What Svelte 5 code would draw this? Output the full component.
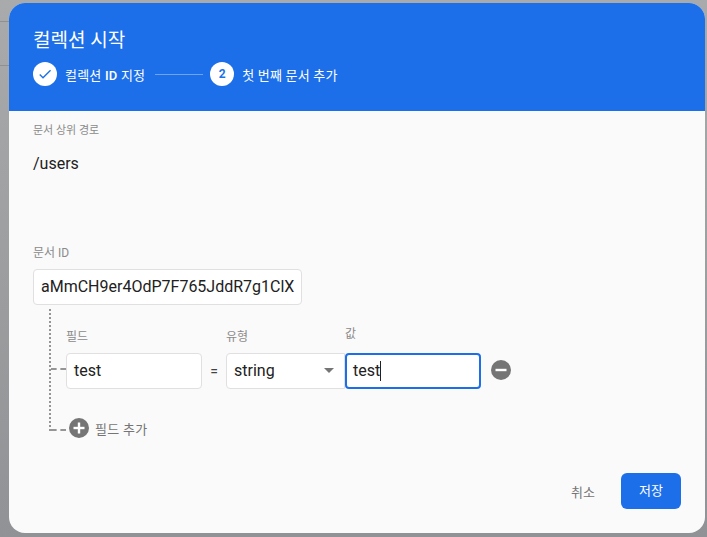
<script>
  let docId = "aMmCH9er4OdP7F765JddR7g1ClX";
</script>

<div class="backdrop">
  <div class="dialog">
    <header>
      <h1>컬렉션 시작</h1>
      <div class="stepper">
        <span class="circle">
          <svg width="16" height="16" viewBox="0 0 24 24"><path d="M9 16.2 4.8 12l-1.4 1.4L9 19 21 7l-1.4-1.4z" fill="#1a73e8" /></svg>
        </span>
        <span class="step-label">컬렉션 <b>ID</b> 지정</span>
        <span class="step-line"></span>
        <span class="circle num">2</span>
        <span class="step-label">첫 번째 문서 추가</span>
      </div>
    </header>

    <div class="body">
      <div class="label">문서 상위 경로</div>
      <div class="path">/users</div>

      <div class="label id-label">문서 ID</div>
      <div class="input id-input">{docId}</div>

      <div class="tree">
        <div class="labels">
          <span class="col-name">필드</span>
          <span class="col-type">유형</span>
          <span class="col-value">값</span>
        </div>
        <div class="row">
          <div class="input name">test</div>
          <span class="eq">=</span>
          <div class="input type">string<span class="caret"></span></div>
          <div class="input value">test<span class="cursor"></span></div>
          <svg class="remove" width="20" height="20" viewBox="0 0 20 20">
            <circle cx="10" cy="10" r="10" fill="#757575" />
            <rect x="4.5" y="8.8" width="11" height="2.4" fill="#fff" />
          </svg>
        </div>
        <div class="add">
          <svg width="20" height="20" viewBox="0 0 20 20">
            <circle cx="10" cy="10" r="10" fill="#757575" />
            <rect x="4.5" y="8.8" width="11" height="2.4" fill="#fff" />
            <rect x="8.8" y="4.5" width="2.4" height="11" fill="#fff" />
          </svg>
          <span>필드 추가</span>
        </div>
      </div>

      <footer>
        <span class="cancel">취소</span>
        <span class="save">저장</span>
      </footer>
    </div>
  </div>
</div>

<style>
  :global(body) {
    margin: 0;
    font-family: Roboto, "Noto Sans CJK KR", sans-serif;
  }

  .backdrop {
    width: 707px;
    height: 537px;
    box-sizing: border-box;
    padding: 3px 2px 4px 9px;
    background:
      linear-gradient(#8f9092, #8f9092) 0 21px / 9px 1px no-repeat,
      linear-gradient(#8f9092, #8f9092) 0 65px / 9px 1px no-repeat,
      linear-gradient(#a9aaab, #909295);
    overflow: hidden;
  }

  .dialog {
    height: 530px;
    border-radius: 16px;
    overflow: hidden;
    background: #fafafa;
  }

  header {
    height: 108px;
    box-sizing: border-box;
    padding: 24px 24px 0;
    background: #1c6fe9;
    color: #fff;
  }

  h1 {
    margin: 0;
    font-size: 19px;
    font-weight: 400;
    line-height: 28px;
  }

  .stepper {
    display: flex;
    align-items: center;
    margin-top: 7px;
  }

  .circle {
    flex: none;
    display: flex;
    align-items: center;
    justify-content: center;
    width: 24px;
    height: 24px;
    border-radius: 50%;
    background: #fff;
  }

  .num {
    color: #1a73e8;
    font-size: 12px;
    font-weight: 700;
  }

  .step-label {
    margin-left: 8px;
    font-size: 13px;
    letter-spacing: 0.2px;
  }

  .step-label b {
    font-weight: 500;
  }

  .step-line {
    width: 48px;
    height: 1px;
    margin: 0 7px 0 10px;
    background: #6ea5f0;
  }

  .body {
    padding: 0 24px;
    color: #212121;
  }

  .label {
    color: #8a8a8a;
    font-size: 11px;
    line-height: 16px;
  }

  .body > .label:first-child {
    padding-top: 12px;
  }

  .path {
    margin-top: 13px;
    font-size: 16px;
    line-height: 24px;
  }

  .id-label {
    margin-top: 69px;
    font-size: 12px;
  }

  .input {
    flex: none;
    box-sizing: border-box;
    height: 36px;
    padding: 0 7px;
    border: 1px solid #e0e0e0;
    border-radius: 4px;
    background: #fff;
    font-size: 16px;
    line-height: 34px;
    white-space: nowrap;
  }

  .id-input {
    width: 269px;
    margin-top: 8px;
  }

  .tree {
    position: relative;
    box-sizing: border-box;
    width: 480px;
    height: 122px;
    margin: 4px 0 0 16px;
    padding: 20px 0 0 15px;
    border-left: 2px dotted #959595;
  }

  .tree::before,
  .tree::after {
    content: "";
    position: absolute;
    left: 0;
    width: 15px;
    border-top: 2px dashed #959595;
  }

  .tree::before {
    top: 59px;
  }

  .tree::after {
    bottom: 0;
  }

  .labels {
    display: flex;
    color: #8a8a8a;
    font-size: 12px;
    line-height: 16px;
  }

  .col-name {
    width: 160px;
  }

  .col-type {
    width: 119px;
  }

  .col-value {
    margin-top: -3px;
  }

  .row {
    display: flex;
    align-items: center;
    margin-top: 8px;
  }

  .name {
    width: 136px;
  }

  .eq {
    flex: none;
    width: 24px;
    text-align: center;
    font-size: 14px;
    color: #424242;
  }

  .type {
    position: relative;
    width: 119px;
    border-radius: 4px 0 0 4px;
  }

  .caret {
    position: absolute;
    right: 10px;
    top: 14px;
    border: 5px solid transparent;
    border-top: 5px solid #757575;
    border-bottom: 0;
  }

  .value {
    width: 136px;
    border: 2px solid #1c6fe9;
    padding: 0 6px;
    line-height: 32px;
  }

  .cursor {
    display: inline-block;
    width: 1px;
    height: 20px;
    background: #212121;
    vertical-align: -5px;
  }

  .remove {
    flex: none;
    margin: -2px 0 0 10px;
  }

  .add {
    position: absolute;
    left: 18px;
    bottom: -7px;
    display: flex;
    align-items: center;
    gap: 6px;
    color: #757575;
    font-size: 13px;
    letter-spacing: 0.3px;
  }

  footer {
    display: flex;
    justify-content: flex-end;
    align-items: center;
    margin: 42px 0 0;
    gap: 26px;
    font-size: 13px;
  }

  .cancel {
    color: #757575;
  }

  .save {
    width: 60px;
    height: 36px;
    border-radius: 6px;
    background: #1c6fe9;
    color: #fff;
    text-align: center;
    line-height: 36px;
  }
</style>
